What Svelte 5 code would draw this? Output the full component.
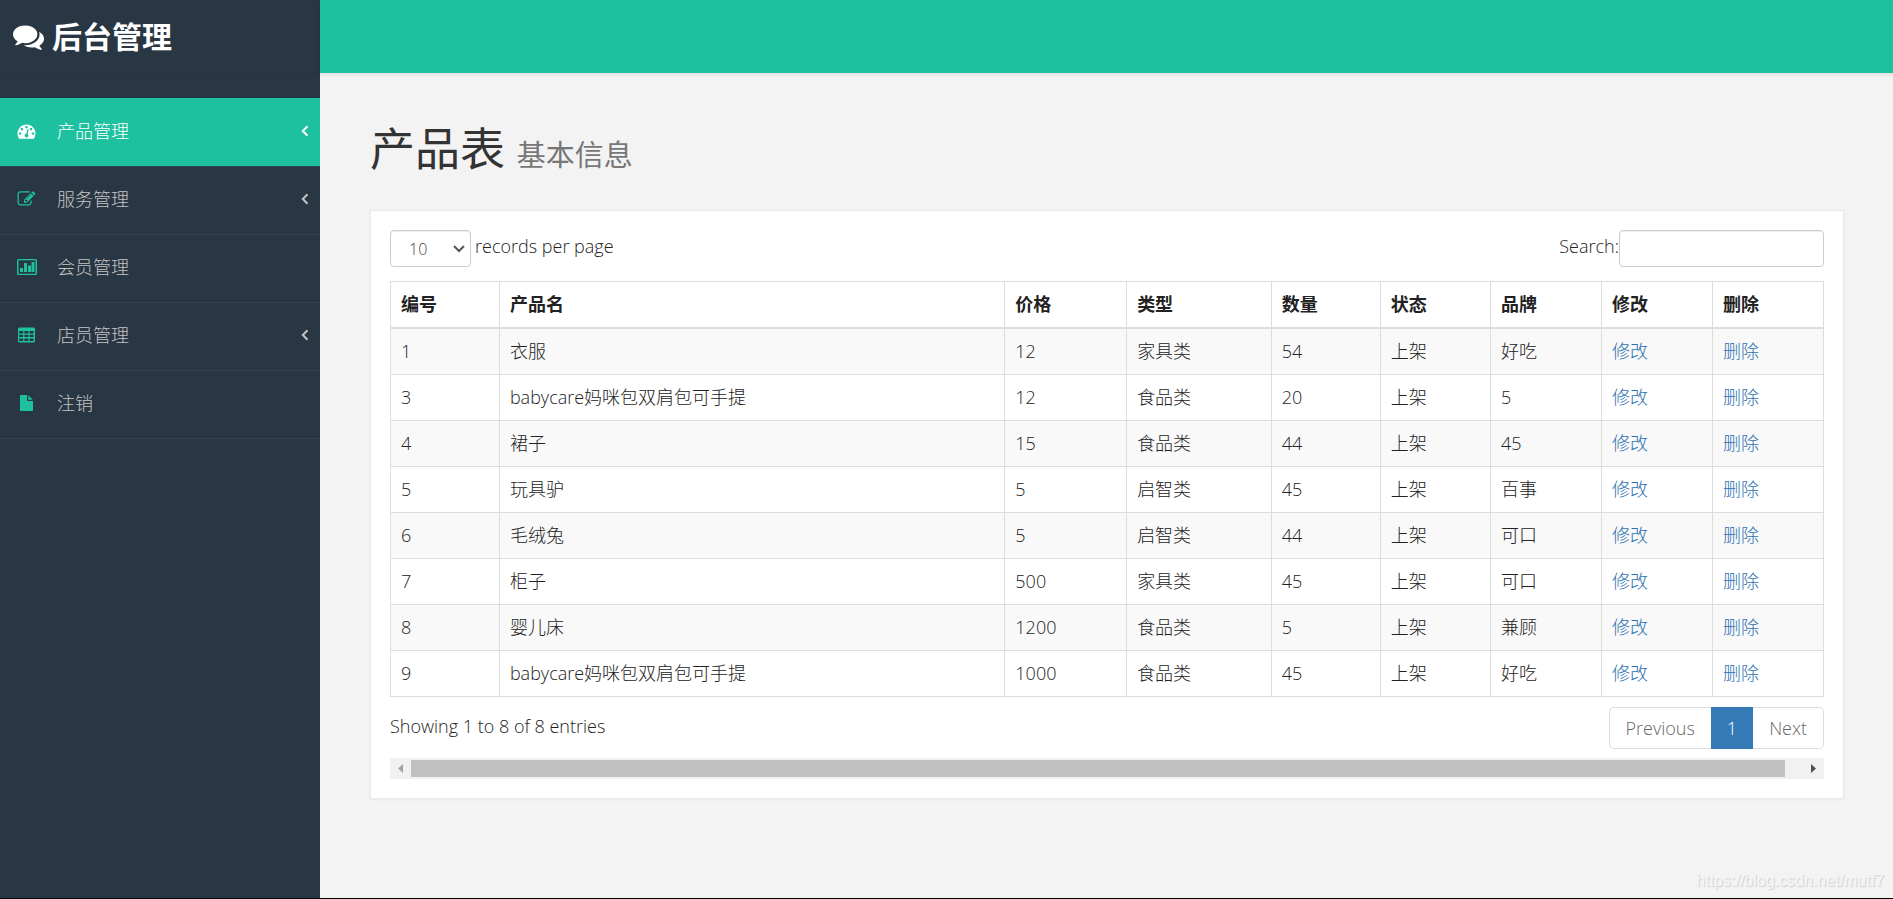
<script>
	let perPage = $state('10');
	let search = $state('');

	const menu = [
		{ label: '产品管理', icon: 'dashboard', arrow: true, active: true },
		{ label: '服务管理', icon: 'edit', arrow: true },
		{ label: '会员管理', icon: 'chart' },
		{ label: '店员管理', icon: 'table', arrow: true },
		{ label: '注销', icon: 'file' }
	];

	// share of the table width, in percent
	const columns = [
		{ title: '编号', width: 7.6 },
		{ title: '产品名', width: 35.27 },
		{ title: '价格', width: 8.5 },
		{ title: '类型', width: 10.1 },
		{ title: '数量', width: 7.6 },
		{ title: '状态', width: 7.7 },
		{ title: '品牌', width: 7.74 },
		{ title: '修改', width: 7.74 },
		{ title: '删除', width: 7.75 }
	];

	const products = [
		{ id: 1, name: '衣服', price: 12, type: '家具类', count: 54, status: '上架', brand: '好吃' },
		{ id: 3, name: 'babycare妈咪包双肩包可手提', price: 12, type: '食品类', count: 20, status: '上架', brand: '5' },
		{ id: 4, name: '裙子', price: 15, type: '食品类', count: 44, status: '上架', brand: '45' },
		{ id: 5, name: '玩具驴', price: 5, type: '启智类', count: 45, status: '上架', brand: '百事' },
		{ id: 6, name: '毛绒兔', price: 5, type: '启智类', count: 44, status: '上架', brand: '可口' },
		{ id: 7, name: '柜子', price: 500, type: '家具类', count: 45, status: '上架', brand: '可口' },
		{ id: 8, name: '婴儿床', price: 1200, type: '食品类', count: 5, status: '上架', brand: '兼顾' },
		{ id: 9, name: 'babycare妈咪包双肩包可手提', price: 1000, type: '食品类', count: 45, status: '上架', brand: '好吃' }
	];

	const rows = $derived(
		products
			.filter((p) => Object.values(p).join(' ').toLowerCase().includes(search.toLowerCase()))
			.slice(0, Number(perPage))
	);
</script>

{#snippet icon(name)}
	{#if name === 'dashboard'}
		<svg class="icon" viewBox="0 0 1792 1792" aria-hidden="true"><path d="M384 1152q0-53-37.5-90.5t-90.5-37.5-90.5 37.5-37.5 90.5 37.5 90.5 90.5 37.5 90.5-37.5 37.5-90.5zm192-448q0-53-37.5-90.5t-90.5-37.5-90.5 37.5-37.5 90.5 37.5 90.5 90.5 37.5 90.5-37.5 37.5-90.5zm428 481l101-382q6-26-7.5-48.5t-38.5-29.5-48 6.5-30 39.5l-101 382q-60 5-107 43.5t-63 98.5q-20 77 20 146t117 89 146-20 89-117q16-60-6-117t-72-91zm660-33q0-53-37.5-90.5t-90.5-37.5-90.5 37.5-37.5 90.5 37.5 90.5 90.5 37.5 90.5-37.5 37.5-90.5zm-640-640q0-53-37.5-90.5t-90.5-37.5-90.5 37.5-37.5 90.5 37.5 90.5 90.5 37.5 90.5-37.5 37.5-90.5zm448 192q0-53-37.5-90.5t-90.5-37.5-90.5 37.5-37.5 90.5 37.5 90.5 90.5 37.5 90.5-37.5 37.5-90.5zm320 448q0 261-141 483-19 29-54 29h-1402q-35 0-54-29-141-221-141-483 0-182 71-348t191-286 286-191 348-71 348 71 286 191 191 286 71 348z" /></svg>
	{:else if name === 'edit'}
		<svg class="icon" viewBox="0 0 1792 1792" aria-hidden="true"><path d="M888 1184l116-116-152-152-116 116v56h96v96h56zm440-720q-16-16-33 1l-350 350q-17 17-1 33t33-1l350-350q17-17 1-33zm80 594v190q0 119-84.5 203.5t-203.5 84.5h-832q-119 0-203.5-84.5t-84.5-203.5v-832q0-119 84.5-203.5t203.5-84.5h832q63 0 117 25 15 7 18 23 3 17-9 29l-49 49q-14 14-32 8-23-6-45-6h-832q-66 0-113 47t-47 113v832q0 66 47 113t113 47h832q66 0 113-47t47-113v-126q0-13 9-22l64-64q15-15 35-7t20 29zm-96-738l288 288-672 672h-288v-288zm444 132l-92 92-288-288 92-92q28-28 68-28t68 28l152 152q28 28 28 68t-28 68z" /></svg>
	{:else if name === 'chart'}
		<svg class="icon wide" viewBox="0 0 20 18" aria-hidden="true"><path fill-rule="evenodd" d="M1.5 1h17A1.5 1.5 0 0 1 20 2.5v13a1.5 1.5 0 0 1-1.5 1.500h-17A1.5 1.5 0 0 1 0 15.5v-13A1.5 1.5 0 0 1 1.5 1zm0 1.300v13.400h17V2.300zM3 10h3v4H3zM7 5h3v9H7zM11 7.500h3V14h-3zM14.500 4h3v10h-3z" /></svg>
	{:else if name === 'table'}
		<svg class="icon" viewBox="0 0 19 18" aria-hidden="true"><path fill-rule="evenodd" d="M2.500 1.500h14A1.500 1.500 0 0 1 18 3v12a1.500 1.500 0 0 1-1.500 1.500h-14A1.500 1.500 0 0 1 1 15V3a1.500 1.500 0 0 1 1.500-1.500zM2.200 5v2.400h4V5zm5.200 0v2.400h4V5zm5.200 0v2.400h4V5zM2.200 8.700v2.400h4V8.700zm5.200 0v2.400h4V8.700zm5.200 0v2.400h4V8.700zM2.200 12.500v2.400h4v-2.400zm5.200 0v2.400h4v-2.400zm5.200 0v2.400h4v-2.400z" /></svg>
	{:else}
		<svg class="icon" viewBox="0 0 19 18" aria-hidden="true"><path d="M4 1H10v5q0 1 1 1h5v9q0 1-1 1H4q-1 0-1-1V2q0-1 1-1zM11.200 1.200q.5.200 4.600 4.600h-4.600z" /></svg>
	{/if}
{/snippet}

<div class="wrapper">
	<aside class="sidebar">
		<a class="brand" href="#home">
			<svg class="brand-icon" viewBox="0 0 1792 1792" aria-hidden="true"><path d="M1408 768q0 139-94 257t-256.5 186.5-353.5 68.5q-86 0-176-16-124 88-278 128-36 9-86 16h-3q-11 0-20.5-8t-11.5-21q-1-3-1-6.5t.5-6.5 2-6l2.5-5 3.5-5.5 4-5 4.5-5 4-4.5q5-6 23-25t26-29.5 22.5-29 25-38.5 20.5-44q-124-72-195-177t-71-224q0-139 94-257t256.5-186.5 353.5-68.5 353.5 68.5 256.5 186.5 94 257zm384 256q0 120-71 224.5t-195 176.5q10 24 20.5 44t25 38.5 22.5 29 26 29.5 23 25q1 1 4 4.5t4.5 5 4 5 3.500 5.500l2.500 5 2 6 .5 6.500-1 6.500q-3 14-13 22t-22 7q-50-7-86-16-154-40-278-128-90 16-176 16-271 0-472-132 58 4 88 4 161 0 309-45t264-129q125-92 192-212t67-254q0-77-23-152 129 71 204 178t75 230z" /></svg>
			<strong>后台管理</strong>
		</a>
		<nav>
			<ul class="menu">
				{#each menu as item}
					<li>
						<a class="menu-link" class:active={item.active} href="#{item.icon}">
							{@render icon(item.icon)}
							<span class="menu-text">{item.label}</span>
							{#if item.arrow}
								<svg class="arrow" viewBox="0 0 8 12" aria-hidden="true"><path d="M6.500 1.300L1.800 6l4.700 4.700" /></svg>
							{/if}
						</a>
					</li>
				{/each}
			</ul>
		</nav>
	</aside>

	<div class="page">
		<header class="topbar"></header>
		<main class="content">
			<h1>产品表 <small>基本信息</small></h1>

			<section class="panel">
				<div class="bar controls">
					<label>
						<select bind:value={perPage}>
							<option>10</option>
							<option>25</option>
							<option>50</option>
							<option>100</option>
						</select>
						records per page
					</label>
					<label>Search:<input type="search" bind:value={search} /></label>
				</div>

				<table>
					<colgroup>
						{#each columns as col}
							<col style="width: {col.width}%" />
						{/each}
					</colgroup>
					<thead>
						<tr>
							{#each columns as col}
								<th>{col.title}</th>
							{/each}
						</tr>
					</thead>
					<tbody>
						{#each rows as row (row.id)}
							<tr>
								<td>{row.id}</td>
								<td>{row.name}</td>
								<td>{row.price}</td>
								<td>{row.type}</td>
								<td>{row.count}</td>
								<td>{row.status}</td>
								<td>{row.brand}</td>
								<td><a href="#edit-{row.id}">修改</a></td>
								<td><a href="#delete-{row.id}">删除</a></td>
							</tr>
						{/each}
					</tbody>
				</table>

				<div class="bar footer">
					<div class="info">Showing 1 to {rows.length} of {rows.length} entries</div>
					<div class="pagination">
						<button>Previous</button>
						<button class="current">1</button>
						<button>Next</button>
					</div>
				</div>

				<div class="scrollbar" aria-hidden="true">
					<svg viewBox="0 0 21 21"><path class="off" d="M13 6v9l-5-4.500z" /></svg>
					<div class="track"><div class="thumb"></div></div>
					<svg viewBox="0 0 21 21"><path d="M8 6v9l5-4.500z" /></svg>
				</div>
			</section>
		</main>
	</div>
	<div class="watermark">https://blog.csdn.net/mutf7</div>
</div>

<style>
	:global(body) {
		margin: 0;
		background: #f3f3f3;
	}

	.wrapper {
		position: relative;
		display: flex;
		box-sizing: border-box;
		min-height: 100vh;
		border-bottom: 1px solid #000;
		font-family: 'Open Sans', 'Noto Sans CJK SC', sans-serif;
		font-size: 18px;
		font-weight: 300;
		line-height: 26px;
		color: #222;
	}

	a {
		color: #2a70b0;
		text-decoration: none;
	}

	.sidebar {
		flex: 0 0 320px;
		background: #293643;
	}

	.brand {
		display: flex;
		align-items: center;
		gap: 8px;
		box-sizing: border-box;
		height: 74px;
		padding-left: 13px;
		border-bottom: 1px solid #26323e;
		color: #fff;
		font-size: 30px;
	}

	.brand strong {
		font-weight: 700;
	}

	.brand-icon {
		width: 31px;
		height: 31px;
		fill: #fff;
	}

	.menu {
		margin: 0;
		padding: 24px 0 0;
		list-style: none;
	}

	.menu-link {
		display: flex;
		align-items: center;
		box-sizing: border-box;
		height: 68px;
		padding: 0 11px 3px 17px;
		border-bottom: 1px solid #34424f;
		color: #c4c4c4;
	}

	.menu-link.active {
		height: 69px;
		background: #1dc1a0;
		color: #fff;
	}

	.icon {
		width: 19px;
		height: 18px;
		fill: #1dc1a0;
	}

	.icon.wide {
		width: 20px;
	}

	.active .icon {
		fill: #fff;
	}

	.menu-text {
		flex: 1;
		margin-left: 21px;
	}

	.wide + .menu-text {
		margin-left: 20px;
	}

	.arrow {
		width: 8px;
		height: 12px;
		fill: none;
		stroke: currentColor;
		stroke-width: 2;
	}

	.page {
		flex: 1;
		min-width: 0;
	}

	.topbar {
		height: 73px;
		background: #1dc1a0;
		box-shadow: 0 2px 3px rgba(0, 0, 0, 0.08);
	}

	.content {
		padding: 44px 49px 44px 50px;
	}

	h1 {
		margin: 0 0 23px;
		font-size: 45px;
		font-weight: 400;
		line-height: 64px;
		color: #333;
	}

	h1 small {
		font-size: 29px;
		color: #777;
	}

	.panel {
		padding: 19px;
		background: #fff;
		border: 1px solid #e9e9e9;
		box-shadow: 0 1px 2px rgba(0, 0, 0, 0.05);
	}

	.bar {
		display: flex;
		justify-content: space-between;
		align-items: flex-start;
	}

	.controls {
		margin-bottom: 14px;
	}

	label {
		display: flex;
		align-items: flex-start;
		line-height: 32px;
	}

	select,
	input {
		box-sizing: border-box;
		height: 37px;
		border: 1px solid #ccc;
		border-radius: 4px;
		background: #fff;
		box-shadow: inset 0 1px 1px rgba(0, 0, 0, 0.075);
		font: inherit;
		font-size: 16px;
		color: #444;
	}

	select {
		appearance: none;
		width: 81px;
		margin-right: 4px;
		padding: 0 0 0 18px;
		background: #fff url("data:image/svg+xml,%3Csvg xmlns='http://www.w3.org/2000/svg' width='12' height='8'%3E%3Cpath d='M1 1l5 5 5-5' fill='none' stroke='%23555' stroke-width='2'/%3E%3C/svg%3E") no-repeat right 5px center;
	}

	input {
		width: 205px;
		padding: 0 12px;
	}

	table {
		width: 100%;
		table-layout: fixed;
		border-collapse: collapse;
	}

	th,
	td {
		padding: 9px 10px 10px;
		border: 1px solid #ddd;
		text-align: left;
	}

	th {
		border-bottom-width: 2px;
		font-weight: 700;
	}

	tbody tr:nth-child(odd) {
		background: #f9f9f9;
	}

	.footer {
		padding: 10px 0 9px;
	}

	.info {
		padding-top: 6px;
	}

	.pagination {
		display: flex;
	}

	.pagination button {
		height: 42px;
		padding: 0 16px;
		border: 1px solid #ddd;
		background: #fff;
		font: inherit;
		color: #666;
	}

	.pagination button:first-child {
		border-right: 0;
		border-radius: 5px 0 0 5px;
	}

	.pagination button:last-child {
		border-left: 0;
		border-radius: 0 5px 5px 0;
	}

	.pagination .current {
		padding: 0 15px;
		border-color: #337ab7;
		background: #337ab7;
		color: #fff;
	}

	.scrollbar {
		display: flex;
		align-items: center;
		height: 21px;
		background: #f1f1f1;
	}

	.scrollbar svg {
		width: 21px;
		height: 21px;
		fill: #505050;
	}

	.scrollbar .off {
		fill: #a3a3a3;
	}

	.track {
		flex: 1;
	}

	.thumb {
		width: 98.7%;
		height: 17px;
		background: #c1c1c1;
	}

	.watermark {
		position: absolute;
		right: 9px;
		bottom: 7px;
		font-family: 'Liberation Sans', sans-serif;
		font-size: 16px;
		font-weight: 400;
		line-height: 20px;
		color: #f6f6f6;
		text-shadow: 1px 1px 1px #ccc;
	}
</style>
